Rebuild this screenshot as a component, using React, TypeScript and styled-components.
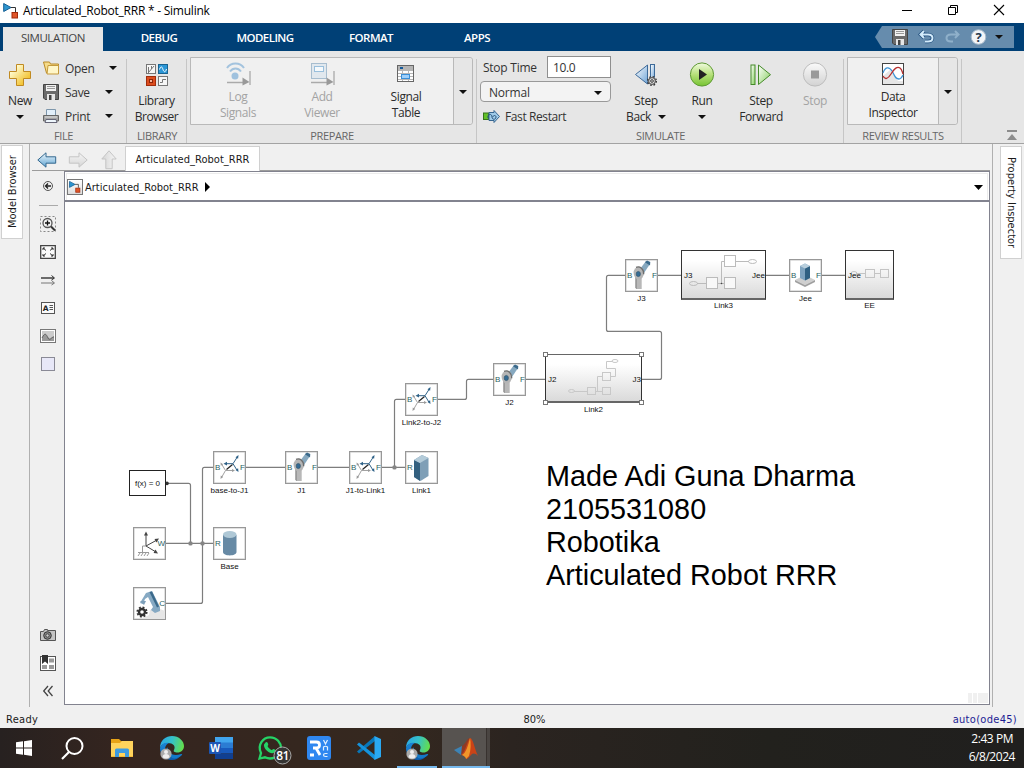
import React from "react";
import styled, { createGlobalStyle, css } from "styled-components";

const Global = createGlobalStyle`
  *{box-sizing:border-box}
  html,body{margin:0;padding:0;overflow:hidden}
  body{font-family:"Open Sans","Noto Sans",sans-serif;font-size:12px;color:#1a1a1a;background:#f0f0f0}
  svg{display:block;flex:none;overflow:visible}
`;

const Window = styled.div`width:1024px;height:768px;display:flex;flex-direction:column;overflow:hidden;background:#f0f0f0;`;

/* title bar */
const TitleBar = styled.header`height:23px;flex:none;background:#fff;display:flex;align-items:center;padding:0 2px 1px 3px;color:#000;`;
const Title = styled.span`flex:1;padding-left:4px;font-size:12px;letter-spacing:-0.24px;white-space:nowrap;line-height:22px;`;
const WinButton = styled.div`width:46px;height:20px;margin-bottom:2px;display:flex;align-items:center;justify-content:center;`;

/* tab strip */
const TabStrip = styled.nav`height:28px;flex:none;background:#004076;display:flex;align-items:flex-end;padding-left:3px;`;
const Tab = styled.div<{ $active?: boolean }>`
  width:106px;height:24px;line-height:21px;text-align:center;color:#fff;font-weight:600;letter-spacing:-0.55px;font-size:11.5px;
  ${(p) => p.$active && css`width:100px;margin-right:3px;background:#e6e6e6;color:#444;font-weight:400;letter-spacing:-0.45px;`}
`;
const Spacer = styled.div`flex:1;`;
const QuickAccess = styled.div`width:139px;height:22px;margin:0 10px 3px 0;background:#668cad;clip-path:polygon(7px 0,100% 0,100% 100%,7px 100%,0 50%);display:flex;align-items:center;padding-left:17px;gap:11px;
  & > :last-child{margin-left:-3px;}
`;

/* ribbon */
const Ribbon = styled.div`height:93px;flex:none;background:#e6e6e6;border-bottom:1px solid #a3a3a3;display:flex;`;
const Section = styled.section<{ $w: number }>`width:${(p) => p.$w}px;flex:none;display:flex;flex-direction:column;background:linear-gradient(#c6c6c6,#c6c6c6) right 8px/1px 84px no-repeat;`;
const SectionBody = styled.div`height:77px;padding-top:6px;display:flex;`;
const SectionName = styled.div`height:15px;line-height:15px;text-align:center;font-size:11px;letter-spacing:-0.35px;color:#666;white-space:nowrap;`;
const BigButton = styled.div<{ $w: number; $off?: boolean; $compact?: boolean }>`
  width:${(p) => p.$w}px;flex:none;display:flex;flex-direction:column;align-items:center;color:${(p) => (p.$off ? "#a3a3a3" : "#2b2b2b")};
  font-size:12px;line-height:16px;letter-spacing:-0.4px;white-space:nowrap;
  & > :first-child{height:${(p) => (p.$compact ? 31 : 36)}px;}
`;
const IconBox = styled.div`display:flex;align-items:center;justify-content:center;`;
const Line = styled.div`height:16px;display:flex;align-items:center;gap:7px;`;
const FileMenu = styled.div`display:flex;flex-direction:column;margin:-1px 0 0 3px;`;
const FileRow = styled.div<{ $gap: number }>`height:24px;display:flex;align-items:center;color:#333;letter-spacing:-0.3px;
  & > svg:first-child{margin-right:6px;}
  & > span{width:${(p) => p.$gap}px;}
`;
const Gallery = styled.div`height:68px;margin-left:3px;display:flex;border:1px solid #b9b9b9;border-radius:0 3px 3px 0;background:#f0f0f0;`;
const GalleryPad = styled.div`width:5px;`;
const GalleryDrop = styled.div`width:19px;border-left:1px solid #b9b9b9;background:#e6e6e6;display:flex;align-items:center;justify-content:center;border-radius:0 3px 3px 0;padding-top:2px;`;
const SimOptions = styled.div`width:131px;margin-left:3px;margin-right:7px;margin-top:-1px;display:flex;flex-direction:column;`;
const StopRow = styled.div`display:flex;align-items:center;justify-content:space-between;padding-left:3px;letter-spacing:-0.25px;color:#333;height:22px;`;
const TextField = styled.div`width:64px;height:22px;border:1px solid #8f8f8f;background:#fff;line-height:21px;padding-left:5px;letter-spacing:-0.4px;`;
const SelectBox = styled.div`height:22px;margin-top:3px;border:1px solid #999;border-radius:4px;background:#f3f3f3;display:flex;align-items:center;justify-content:space-between;padding:2px 8px 0;letter-spacing:-0.2px;color:#333;`;
const FastRow = styled.div`height:24px;margin-top:3px;display:flex;align-items:center;gap:5px;padding-left:3px;letter-spacing:-0.4px;color:#333;`;
const RibbonEnd = styled.div`flex:1;display:flex;align-items:flex-end;justify-content:flex-end;padding:0 7px 3px 0;`;

/* workspace */
const Work = styled.main`height:565px;flex:none;display:flex;font-family:"DejaVu Sans Condensed","DejaVu Sans",sans-serif;font-size:11px;`;
const Rail = styled.aside<{ $right?: boolean }>`width:30px;height:563px;flex:none;
  ${(p) => p.$right ? css`width:32px;border-left:1px solid #b0b0b0;padding:2px 0 0 7px;` : css`border-right:1px solid #b0b0b0;padding:1px 0 0 1px;`}
`;
const RailTab = styled.div<{ $h: number; $flip?: boolean }>`width:22px;height:${(p) => p.$h}px;background:#fff;border:1px solid #d0d0d0;writing-mode:vertical-rl;display:flex;align-items:center;justify-content:center;white-space:nowrap;color:#1a1a1a;letter-spacing:0;
  ${(p) => p.$flip && css`transform:rotate(180deg);`}
`;
const Center = styled.div`width:962px;flex:none;display:flex;flex-direction:column;`;
const DocTabs = styled.div`height:27px;margin:0 2px;display:flex;align-items:flex-end;background:linear-gradient(#9c9c9c,#9c9c9c) 0 26px/100% 1px no-repeat;`;
const NavArrows = styled.div`width:93px;height:26px;display:flex;align-items:center;padding:4px 0 0 5px;gap:11px;`;
const DocTab = styled.div`width:135px;height:25px;background:#fff;border:1px solid #d0d0d0;border-bottom:0;line-height:26px;text-align:center;letter-spacing:0.03px;color:#1a1a1a;`;
const Split = styled.div`display:flex;height:534px;`;
const Tools = styled.div`width:34px;display:flex;flex-direction:column;align-items:center;padding:1px 0 0 2px;`;
const Tool = styled.div`height:28px;display:flex;align-items:center;justify-content:center;`;
const ToolRule = styled.div`height:10px;width:19px;background:linear-gradient(#aaa,#aaa) 0 5px/100% 1px no-repeat;`;
const Editor = styled.div`width:926px;border:1px solid #82838f;background:#fff;display:flex;flex-direction:column;`;
const Crumb = styled.div`height:27px;margin:1px 1px 0;border:1px solid #ececec;border-bottom:0;display:flex;align-items:center;padding:0 4px 0 0;letter-spacing:0.01px;`;
const CrumbIcon = styled.div`width:16px;height:16px;border:1px solid #777;background:linear-gradient(#fff,#ddd);margin:0 2px 0 0;display:flex;align-items:center;justify-content:center;`;
const CrumbName = styled.span`margin-right:6px;`;
const CrumbRule = styled.div`height:2px;background:#82838f;flex:none;`;
const Canvas = styled.div`position:relative;flex:1;font-family:"Liberation Sans",Arial,sans-serif;overflow:hidden;`;
const Wires = styled.svg`position:absolute;left:0;top:0;`;

/* diagram nodes live at free positions on the canvas */
type BoxProps = { $x: number; $y: number; $w: number; $h: number; $kind?: string };
const Block = styled.div<BoxProps>`
  position:absolute;left:${(p) => p.$x - 65}px;top:${(p) => p.$y - 202}px;width:${(p) => p.$w}px;height:${(p) => p.$h}px;
  background:#fff;border:1px solid #989898;box-shadow:inset 0 0 0 0.5px #c4c4c4;
  ${(p) => p.$kind === "solver" && css`border-color:#222;box-shadow:none;`}
  ${(p) => (p.$kind === "sub" || p.$kind === "selected") && css`border-color:#333;box-shadow:none;border-bottom:2px solid #666;background:linear-gradient(#fff 20%,#dadada);`}
  ${(p) => p.$kind === "selected" && css`border-top-color:#666;`}
`;
const Port = styled.span<{ $right?: boolean; $dark?: boolean; $top?: number }>`position:absolute;top:${(p) => p.$top ?? 11}px;${(p) => (p.$right ? "right:0" : p.$dark ? "left:2px" : "left:1px")};font-size:8px;line-height:10px;color:${(p) => (p.$dark ? "#111" : "#2c6262")};`;
const BlockName = styled.span<{ $gap: number }>`position:absolute;top:calc(100% + ${(p) => p.$gap}px);left:50%;transform:translateX(-50%);white-space:nowrap;font-size:8px;line-height:10px;color:#111;`;
const Formula = styled.span`display:block;text-align:center;font-size:8px;line-height:25px;color:#111;`;
const Art = styled.svg`position:absolute;left:-1px;top:-1px;`;
const Note = styled.div`position:absolute;left:481px;top:258px;font-size:28.8px;line-height:33px;color:#000;white-space:pre;`;
const Grip = styled.div`position:absolute;right:1px;bottom:1px;display:flex;gap:1px;`;
const GripCell = styled.i<{ $w: number }>`width:${(p) => p.$w}px;height:10px;background:#f0f0f0;`;

/* status bar */
const Status = styled.footer`height:19px;flex:none;display:grid;grid-template-columns:1fr auto 1fr;align-items:center;padding:1px 7px 0 6px;font-family:"DejaVu Sans Condensed","DejaVu Sans",sans-serif;font-size:11px;letter-spacing:0.3px;`;
const Zoom = styled.span`padding-left:46px;letter-spacing:0;`;
const Solver = styled.span`text-align:right;color:#1c1c94;`;

/* taskbar */
const Taskbar = styled.div`height:40px;flex:none;display:flex;background:linear-gradient(90deg,#272120 0,#35251f 12%,#35281f 38%,#2b2420 50%,#22211d 75%,#201f1e 100%);color:#fff;`;
const Task = styled.div<{ $w: number; $state?: "open" | "active" }>`width:${(p) => p.$w}px;display:flex;align-items:center;justify-content:center;
  ${(p) => p.$state === "open" && css`background:linear-gradient(#76b9ed,#76b9ed) 4px 100%/40px 2px no-repeat;`}
  ${(p) => p.$state === "active" && css`background:linear-gradient(#76b9ed,#76b9ed) left bottom/100% 2px no-repeat,linear-gradient(90deg,#575350 0 44px,#38322f 44px 45px,#4a4542 45px);`}
`;
const Clock = styled.div`margin-left:auto;padding:2px 9px 0 0;text-align:right;line-height:18px;font-size:12px;letter-spacing:-0.45px;`;
const Time = styled.div`padding-right:2px;`;

const Caret = ({ c = "#111" }: { c?: string }) => <svg width="8" height="4"><path d="M0 0h8L4 4z" fill={c} /></svg>;

const ModelMark = ({ s = 16 }: { s?: number }) => (
  <svg width={s} height={s} viewBox="0 0 16 16">
    <path d="M8 4.500h4.500v4.500" fill="none" stroke="#333" />
    <path d="M.7.5v8L8 4.500z" fill="#2d95cf" stroke="#155f94" />
    <rect x="9" y="9.500" width="5.500" height="5.500" fill="#e0562a" stroke="#a22b0c" />
  </svg>
);
const Floppy = () => (
  <svg width="16" height="16" viewBox="0 0 16 16">
    <path d="M.5.5h15v15H2L.5 14z" fill="#6b6b6b" stroke="#444" />
    <rect x="3" y="1" width="10" height="6" fill="#f2f2f2" /><path d="M4 2.500h8M4 4.500h8" stroke="#999" />
    <rect x="4" y="10" width="8" height="6" fill="#e6e6e6" /><rect x="6" y="11" width="2.500" height="5" fill="#444" />
  </svg>
);
const Plus = () => (
  <svg width="22" height="22" viewBox="0 0 22 22">
    <defs><linearGradient id="gold" x2="1" y2="1"><stop offset=".2" stopColor="#fffbd0" /><stop offset=".8" stopColor="#f2c230" /></linearGradient></defs>
    <path d="M7.500.5h7v7h7v7h-7v7h-7v-7h-7v-7h7z" fill="url(#gold)" stroke="#c08a22" />
  </svg>
);
const Folder = () => (
  <svg width="16" height="16" viewBox="0 0 16 16">
    <path d="M.5 2h6l1 2h8v9H3.500z" fill="#f6dc8a" stroke="#b98a28" />
    <path d="M5 5.500h10.500V14H4z" fill="#fff6c8" stroke="#c59a3c" />
  </svg>
);
const Printer = () => (
  <svg width="16" height="16" viewBox="0 0 16 16">
    <path d="M3.500 1.500h9v6h-9z" fill="#e2effa" stroke="#7d96ab" />
    <path d="M.5 7.500h15V13H.5z" fill="#a5a5a5" stroke="#666" /><path d="M2 9h12" stroke="#e4e4e4" />
    <path d="M3 11.500h10l1 3H2z" fill="#eef6fc" stroke="#667" />
  </svg>
);
const Library = () => (
  <svg width="22" height="22" viewBox="0 0 22 22">
    <rect x=".5" y=".5" width="9" height="9" fill="#f6f6f6" stroke="#777" /><path d="M2.500 9V3M2.500 8.500L8 2M5.500 5V2" stroke="#777" fill="none" />
    <rect x="12.500" y=".5" width="9" height="9" fill="#2a96d6" stroke="#19628f" /><path d="M13.500 5.500c1.500-4 2.500-3 3.500 0s2.500 3 3.500-.5" stroke="#fff" fill="none" />
    <rect x=".5" y="12.500" width="9" height="9" fill="#dc4d1f" stroke="#a12c0c" /><rect x="3.500" y="15.500" width="3" height="3" fill="#f6b49b" stroke="#8c2508" />
    <rect x="12.500" y="12.500" width="9" height="9" fill="#f6f6f6" stroke="#777" /><path d="M14 18.500h2.500v-3H20" stroke="#777" fill="none" />
  </svg>
);
const LogSignals = () => (
  <svg width="26" height="24" viewBox="0 0 26 24">
    <g fill="none" stroke="#a3c3de" strokeWidth="2"><path d="M2 6c4-6 13-6 17 0M5 9.500c3-4 8-4 11 0" /></g>
    <circle cx="10" cy="14" r="3.500" fill="#9fc1de" /><path d="M2 20.500h16M25 9v14" stroke="#aaa" strokeWidth="1.300" /><path d="M17.500 15.500v8l7-3.500z" fill="#999" />
  </svg>
);
const AddViewer = () => (
  <svg width="26" height="24" viewBox="0 0 26 24">
    <rect x="2.500" y="1.500" width="15" height="15" fill="#e1e8ee" stroke="#a7bdcf" /><rect x="5.500" y="4.500" width="9" height="5" fill="#f5f9fc" stroke="#99bfdc" />
    <path d="M2 20.500h16M25 9v14" stroke="#aaa" strokeWidth="1.300" /><path d="M17.500 15.500v8l7-3.500z" fill="#999" />
  </svg>
);
const SignalTable = () => (
  <svg width="18" height="18" viewBox="0 0 18 18">
    <rect x=".5" y=".5" width="16" height="16" fill="#fff" stroke="#666" /><rect x="1" y="1" width="15" height="4" fill="#b5b5b5" /><rect x="3" y="2" width="3" height="2" fill="#15599a" />
    <path d="M1 5.500h15M1 8.500h15M1 11.500h15M1 14.500h15M5.500 5v11M11.500 5v11" stroke="#b5b5b5" />
    <rect x="4.500" y="9.500" width="8" height="4" fill="#9fd0fb" stroke="#3a8fd8" />
  </svg>
);
const StepBack = () => (
  <svg width="24" height="24" viewBox="0 0 24 24">
    <defs><linearGradient id="sb" x2="1" y2="1"><stop stopColor="#fff" /><stop offset="1" stopColor="#6fa5d8" /></linearGradient></defs>
    <path d="M13.500 2v19L1.500 11.500z" fill="url(#sb)" stroke="#3d6a99" /><rect x="16.500" y="1.500" width="4" height="16" fill="url(#sb)" stroke="#3d6a99" />
    <circle cx="18" cy="18" r="4.300" fill="#ddd" stroke="#333" strokeWidth="1.400" strokeDasharray="1.700 1.700" /><circle cx="18" cy="18" r="3.400" fill="#ddd" stroke="#444" /><circle cx="18" cy="18" r="1.300" fill="#fff" stroke="#333" />
  </svg>
);
const Run = () => (
  <svg width="26" height="26" viewBox="0 0 26 26">
    <defs><linearGradient id="rg" x2="0" y2="1"><stop stopColor="#f1fbe0" /><stop offset=".5" stopColor="#b6e07a" /><stop offset="1" stopColor="#76c332" /></linearGradient></defs>
    <circle cx="13" cy="12.500" r="11.600" fill="url(#rg)" stroke="#5f9a35" /><path d="M10 7v11l8-5.500z" fill="#222" />
  </svg>
);
const StepForward = () => (
  <svg width="24" height="22" viewBox="0 0 24 22">
    <defs><linearGradient id="sf" x2="1" y2="1"><stop stopColor="#fff" /><stop offset="1" stopColor="#86cf5d" /></linearGradient></defs>
    <rect x="2" y="1" width="4" height="19.500" fill="url(#sf)" stroke="#458a2a" /><path d="M9.500 1v19.500l12-9.800z" fill="url(#sf)" stroke="#458a2a" />
  </svg>
);
const Stop = () => (
  <svg width="26" height="26" viewBox="0 0 26 26">
    <defs><linearGradient id="st" x2="0" y2="1"><stop stopColor="#fafafa" /><stop offset="1" stopColor="#d2d2d2" /></linearGradient></defs>
    <circle cx="13" cy="12.500" r="11.600" fill="url(#st)" stroke="#bdbdbd" /><rect x="9" y="8.500" width="8" height="8" fill="#9a9a9a" />
  </svg>
);
const Inspector = () => (
  <svg width="22" height="22" viewBox="0 0 22 22">
    <rect x=".5" y=".5" width="21" height="21" fill="#fff" stroke="#444" />
    <path d="M1 21V13l7-6 4 5 4 6h5v3z" fill="#e6e6e6" />
    <path d="M1 10c2-6 6-7 9-2 3 5 3 8 7 8 2 0 3-2 4-4" fill="none" stroke="#3f94d6" strokeWidth="1.300" /><path d="M1 13c2 4 5 3 8-2s6-8 9-6c2 1.500 2 3 3 6" fill="none" stroke="#b52f2f" strokeWidth="1.300" />
  </svg>
);
const FastRestart = () => (
  <svg width="17" height="14" viewBox="0 0 17 14">
    <rect x=".5" y="3" width="5" height="6.500" fill="#63c029" stroke="#35751a" /><path d="M6 2.500h5V.5l5.500 6-5.500 6v-2H6z" fill="#9fcbe9" stroke="#376690" />
    <path d="M5 8c-1-4 4-5 4-1 0 3 4 3 4 0 0-2-3-2-3 0" fill="none" stroke="#28557d" />
  </svg>
);
const NavArrow = ({ on, dir = "" }: { on?: boolean; dir?: string }) => (
  <svg width="20" height="18" viewBox="0 0 20 18">
    <defs><linearGradient id={on ? "na" : "nb"} x2="0" y2="1"><stop stopColor={on ? "#f0f8fd" : "#f6f6f6"} /><stop offset="1" stopColor={on ? "#5fa4d2" : "#d5d5d5"} /></linearGradient></defs>
    <path transform={dir} d="M.8 9l8.200-7.200v4h9.700v6.400H9v4z" fill={`url(#${on ? "na" : "nb"})`} stroke={on ? "#34688f" : "#c5c5c5"} />
  </svg>
);

const G = ({ children, w = 16, h = 16 }: { children: React.ReactNode; w?: number; h?: number }) => <svg width={w} height={h} viewBox={`0 0 ${w} ${h}`} fill="none">{children}</svg>;

/* artwork of the 33px blocks */
const Transform = () => (
  <Art width="33" height="33" fill="none">
    <g stroke="#a2a2a2"><path d="M12.500 19.500l-4 7M12.500 19.500h7.500M12.500 19.500l-4-6.500" /></g>
    <path d="M7.500 28l.3-3.500 2.400 1.400zM22 19.500l-3-1.600v3.200zM7.500 11.500l.3 3.300 2.400-1.600z" fill="#999" />
    <path d="M13.500 18.500l6-5" stroke="#222" strokeWidth="1.200" />
    <path d="M20 12.700l4.500-7M20 12.700h-7M20 12.700l4 6.500" stroke="#2f6288" /><path d="M25.500 4l-3 2.200 2.600 1.600zM10.500 12.700l3.500-1.900v3.800zM25.500 21l-3-2 2.600-1.700z" fill="#2f6288" />
  </Art>
);
const Joint = () => (
  <Art width="33" height="33">
    <path d="M15 10l6-8 4 3-6 9z" fill="#86a8bf" /><path d="M20 3.200l2-1.700 3.300 1.500-.3 3.500z" fill="#3b6a8b" />
    <path d="M11 16h5.700v14H11z" fill="#b8b8b8" /><path d="M10.200 18H12v12l-1.800-1z" fill="#999" />
    <ellipse cx="13.800" cy="14" rx="5.200" ry="6.300" fill="#b5b5b5" /><path d="M11 8.300c4-1.500 8 1.500 7.700 7" fill="none" stroke="#6d6d6d" strokeWidth="1.300" />
    <ellipse cx="13.300" cy="15" rx="2.100" ry="2.600" fill="#356b93" stroke="#31566f" strokeWidth=".7" />
  </Art>
);
const Brick = () => (
  <Art width="33" height="33"><path d="M9 9l8-5 6.500 3v18L15.500 30 9 26z" fill="#7f9fb7" /><path d="M9 9l6 3v18l-6-4z" fill="#33607f" /><path d="M9 9l8-5 6.500 3L15 12z" fill="#b3cbd9" /></Art>
);
const Cylinder = () => (
  <Art width="33" height="33"><path d="M10 8v17c0 4.500 13.500 4.500 13.500 0V8z" fill="#678aa5" /><ellipse cx="16.750" cy="7.500" rx="6.750" ry="3.400" fill="#afc8d6" /></Art>
);
const World = () => (
  <Art width="33" height="33" fill="none">
    <path d="M13 19V7M13 19l11-6M13 19l10 6" stroke="#444" /><path d="M13 4.500l-2 4h4zM26 11.500l-4.500.5 2 3.500zM25 26.500l-4.500-.5 2-3.500z" fill="#444" />
    <path d="M13 19H9.500v6M5 25.500h11M7 26l-2 3M10 26l-2 3M13 26l-2 3M16 26l-2 3" stroke="#999" />
  </Art>
);
const Config = () => (
  <Art width="33" height="33">
    <path d="M17 23l5-3 10 4v8H8l8-4z" fill="#e6e6e6" /><path d="M13 6l6-2 8 16v4l-5 2-4-3 2-3-5-10-3 2-2 5-3-1z" fill="#86a9c3" /><path d="M16.500 5l2.500-.5 7 15-2 1z" fill="#3b6a8b" />
    <path d="M7 14h6l-2 4z" fill="#7d9fb9" /><circle cx="9" cy="25" r="3" fill="none" stroke="#333" strokeWidth="2.400" /><circle cx="9" cy="25" r="4.700" fill="none" stroke="#333" strokeWidth="1.800" strokeDasharray="1.900 1.790" />
  </Art>
);
const Effector = () => (
  <Art width="33" height="33"><path d="M6 21l10-5 10 5-10 5z" fill="#cfcfcf" /><path d="M6 21l10 5v2L6 23zM26 21l-10 5v2l10-5z" fill="#a0a0a0" /><path d="M11 7l5-2.500L21 7v12l-5 2.500-5-2.500z" fill="#7ea3bf" /><path d="M16 9.500L21 7v12l-5 2.500z" fill="#2f6082" /><path d="M11 7l5-2.500L21 7l-5 2.500z" fill="#b9cfdd" /></Art>
);

type SmallDef = { x: number; y: number; art: React.ReactNode; l?: string; r?: string; name?: string };
const smallBlocks: SmallDef[] = [
  { x: 133, y: 527, art: <World />, r: "W" },
  { x: 133, y: 587, art: <Config />, r: "C" },
  { x: 213, y: 451, art: <Transform />, l: "B", r: "F", name: "base-to-J1" },
  { x: 285, y: 451, art: <Joint />, l: "B", r: "F", name: "J1" },
  { x: 349, y: 451, art: <Transform />, l: "B", r: "F", name: "J1-to-Link1" },
  { x: 405, y: 451, art: <Brick />, l: "R", name: "Link1" },
  { x: 213, y: 527, art: <Cylinder />, l: "R", name: "Base" },
  { x: 405, y: 383, art: <Transform />, l: "B", r: "F", name: "Link2-to-J2" },
  { x: 493, y: 363, art: <Joint />, l: "B", r: "F", name: "J2" },
  { x: 625, y: 259, art: <Joint />, l: "B", r: "F", name: "J3" },
  { x: 789, y: 259, art: <Effector />, l: "B", r: "F", name: "Jee" },
];

const Diagram = () => (
  <Canvas>
    <Wires width="924" height="502" viewBox="65 202 924 502" fill="none">
      <g stroke="#7d7d7d" strokeWidth="1.200">
        <path d="M166 483.400h22.500q2 0 2 2v58M166 543.400h48M166 603.400h34.500q2 0 2-2V469.400q0-2 2-2h9M246 467.400h39M318 467.400h31M382 467.400h23M394.500 467.400v-66q0-2 2-2h9M438 399.400h26.500q2 0 2-2v-16q0-2 2-2H493M526 379.400h19M642 379.400h17.500q2 0 2-2v-44q0-2-2-2h-51q-2 0-2-2v-52q0-2 2-2H625M658 275.400h23M766 275.400h23M822 275.400h23" />
      </g>
      <g fill="#858585"><circle cx="190.500" cy="543.400" r="2.200" /><circle cx="202.500" cy="543.400" r="2.200" /><circle cx="394.500" cy="467.400" r="2.200" /></g>
      <circle cx="167" cy="483.400" r="1.800" fill="#333" />
    </Wires>
    <Block $x={129} $y={470} $w={37} $h={26} $kind="solver"><Formula>f(x) = 0</Formula></Block>
    {smallBlocks.map((b, i) => (
      <Block key={i} $x={b.x} $y={b.y} $w={33} $h={33}>
        {b.art}
        {b.l && <Port>{b.l}</Port>}
        {b.r && <Port $right>{b.r}</Port>}
        {b.name && <BlockName $gap={3}>{b.name}</BlockName>}
      </Block>
    ))}
    <Block $x={681} $y={250} $w={85} $h={50} $kind="sub">
      <Art width="85" height="50" fill="none" stroke="#bbb"><rect x="25.500" y="27.500" width="11" height="11" fill="#f8f8f8" /><rect x="43.500" y="27.500" width="11" height="11" fill="#f8f8f8" /><rect x="43.500" y="5.500" width="11" height="11" fill="#fff" /><path d="M16 33.500h9M37 33.500h6M40.500 33.500v-22h3M55 11.500h13" /><ellipse cx="12.500" cy="33.500" rx="4" ry="2" /><ellipse cx="71.500" cy="11.500" rx="4" ry="2" /><circle cx="40.500" cy="33.500" r=".8" fill="#444" stroke="none" /></Art>
      <Port $dark $top={20}>J3</Port><Port $dark $right $top={20}>Jee</Port><BlockName $gap={3}>Link3</BlockName>
    </Block>
    <Block $x={845} $y={250} $w={49} $h={50} $kind="sub">
      <Art width="49" height="50" fill="none" stroke="#c4c4c4"><rect x="20.500" y="19.500" width="9" height="8" /><rect x="35.500" y="19.500" width="8" height="8" /><path d="M11 23.500h9M30 23.500h5" /><ellipse cx="9" cy="23.500" rx="3" ry="2" /></Art>
      <Port $dark $top={20}>Jee</Port><BlockName $gap={3}>EE</BlockName>
    </Block>
    <Block $x={545} $y={354} $w={97} $h={49} $kind="selected">
      <Art width="97" height="49" fill="none" stroke="#c8c8c8"><rect x="42.500" y="33.500" width="8" height="7" /><rect x="57.500" y="33.500" width="8" height="7" /><rect x="57.500" y="18.500" width="8" height="8" /><path d="M29 37.500h13M51 37.500h6M52.500 37.500v-15h5M66 22.500h4.500v-8h-9v-7h6" /><ellipse cx="26.500" cy="37" rx="3" ry="1.500" /><ellipse cx="70" cy="7" rx="3" ry="1.500" />
        <g fill="#fff" stroke="#777"><rect x="-1.500" y="-1.500" width="4" height="4" /><rect x="94.500" y="-1.500" width="4" height="4" /><rect x="-1.500" y="46.500" width="4" height="4" /><rect x="94.500" y="46.500" width="4" height="4" /></g></Art>
      <Port $dark $top={20}>J2</Port><Port $dark $right $top={20}>J3</Port><BlockName $gap={4}>Link2</BlockName>
    </Block>
    <Note>{"Made Adi Guna Dharma\n2105531080\nRobotika\nArticulated Robot RRR"}</Note>
    <Grip><GripCell $w={4} /><GripCell $w={4} /><GripCell $w={10} /></Grip>
  </Canvas>
);

const Edge = () => (
  <svg width="24" height="24" viewBox="0 0 24 24">
    <defs>
      <linearGradient id="e1" x1="0" y1=".2" x2="1" y2=".4"><stop stopColor="#2aa6e8" /><stop offset=".5" stopColor="#35c1c9" /><stop offset="1" stopColor="#62dd4f" /></linearGradient>
      <linearGradient id="e2" x2=".6" y2="1"><stop stopColor="#1b8ada" /><stop offset="1" stopColor="#0c5caf" /></linearGradient>
    </defs>
    <path d="M0 12C0 4 6 0 12 0c7 0 12 5 12 10 0 4-3 6.500-6.500 6.500-3 0-4.500-1-3.500-2.500 2-4-1-7-6-7-4 0-7 2-8 5z" fill="url(#e1)" />
    <path d="M0 12c1-4 5-6 9-5-4 2-5 6-3 10 2 5 9 7 15 2-2 3-5 5-9 5C5 24 0 19 0 12z" fill="url(#e2)" /><path d="M8 11c-1 5 4 10 13 7 1 0 1.500.3 1 1-3 3-7 4-10 3-5-2-7-7-4-11z" fill="#1379c8" />
    <circle cx="6" cy="18" r="5.600" fill="#aaa" /><circle cx="6" cy="16" r="2" fill="#eee" /><path d="M2.500 21c0-4 7-4 7 0-2 2-5 2-7 0z" fill="#eee" />
  </svg>
);

export default function App() {
  return (
    <Window>
      <Global />
      <TitleBar>
        <ModelMark />
        <Title>Articulated_Robot_RRR * - Simulink</Title>
        <WinButton><G w={10} h={10}><path d="M0 5.500h10" stroke="#000" /></G></WinButton>
        <WinButton><G w={10} h={10}><path d="M.5 2.500h7v7h-7zM2.500 2.500v-2h7v7h-2" stroke="#000" /></G></WinButton>
        <WinButton><G w={10} h={10}><path d="M0 0l10 10M10 0L0 10" stroke="#000" strokeWidth="1.100" /></G></WinButton>
      </TitleBar>
      <TabStrip>
        <Tab $active>SIMULATION</Tab><Tab>DEBUG</Tab><Tab>MODELING</Tab><Tab>FORMAT</Tab><Tab>APPS</Tab>
        <Spacer />
        <QuickAccess>
          <Floppy />
          <G w={15} h={14}><path d="M5 1L1.500 4.500 5 8M2 4.500h7c6 0 6 7 0 7H6" stroke="#1f4d7c" strokeWidth="3.500" /><path d="M5 1L1.500 4.500 5 8M2 4.500h7c6 0 6 7 0 7H6" stroke="#d4ecfb" strokeWidth="2" /></G>
          <G w={15} h={14}><path d="M10 1l3.500 3.500L10 8M13 4.500H6c-6 0-6 7 0 7h2" stroke="#8fb0ca" strokeWidth="2" /></G>
          <svg width="16" height="16" viewBox="0 0 16 16"><circle cx="7.500" cy="8" r="7.300" fill="#f2f5f8" stroke="#a7b9ca" /><text x="7.500" y="12.500" textAnchor="middle" fontSize="13" fontWeight="700" fill="#26384e">?</text></svg>
          <Caret />
        </QuickAccess>
      </TabStrip>
      <Ribbon>
        <Section $w={127}>
          <SectionBody>
            <BigButton $w={40}><IconBox><Plus /></IconBox><Line>New</Line><Line><Caret /></Line></BigButton>
            <FileMenu>
              <FileRow $gap={44}><Folder /><span>Open</span><Caret /></FileRow>
              <FileRow $gap={40}><Floppy /><span>Save</span><Caret /></FileRow>
              <FileRow $gap={40}><Printer /><span>Print</span><Caret /></FileRow>
            </FileMenu>
          </SectionBody>
          <SectionName>FILE</SectionName>
        </Section>
        <Section $w={60}>
          <SectionBody><BigButton $w={59}><IconBox><Library /></IconBox><Line>Library</Line><Line>Browser</Line></BigButton></SectionBody>
          <SectionName>LIBRARY</SectionName>
        </Section>
        <Section $w={290}>
          <SectionBody>
            <Gallery>
              <GalleryPad />
              <BigButton $w={84} $compact $off><IconBox><LogSignals /></IconBox><Line>Log</Line><Line>Signals</Line></BigButton>
              <BigButton $w={84} $compact $off><IconBox><AddViewer /></IconBox><Line>Add</Line><Line>Viewer</Line></BigButton>
              <BigButton $w={84} $compact><IconBox><SignalTable /></IconBox><Line>Signal</Line><Line>Table</Line></BigButton>
              <GalleryPad />
              <GalleryDrop><Caret /></GalleryDrop>
            </Gallery>
          </SectionBody>
          <SectionName>PREPARE</SectionName>
        </Section>
        <Section $w={367}>
          <SectionBody>
            <SimOptions>
              <StopRow>Stop Time<TextField>10.0</TextField></StopRow>
              <SelectBox>Normal<Caret /></SelectBox>
              <FastRow><FastRestart />Fast Restart</FastRow>
            </SimOptions>
            <BigButton $w={56}><IconBox><StepBack /></IconBox><Line>Step</Line><Line>Back<Caret /></Line></BigButton>
            <BigButton $w={56}><IconBox><Run /></IconBox><Line>Run</Line><Line><Caret /></Line></BigButton>
            <BigButton $w={62}><IconBox><StepForward /></IconBox><Line>Step</Line><Line>Forward</Line></BigButton>
            <BigButton $w={46} $off><IconBox><Stop /></IconBox><Line>Stop</Line></BigButton>
          </SectionBody>
          <SectionName>SIMULATE</SectionName>
        </Section>
        <Section $w={118}>
          <SectionBody>
            <Gallery>
              <BigButton $w={90} $compact><IconBox><Inspector /></IconBox><Line>Data</Line><Line>Inspector</Line></BigButton>
              <GalleryDrop><Caret /></GalleryDrop>
            </Gallery>
          </SectionBody>
          <SectionName>REVIEW RESULTS</SectionName>
        </Section>
        <RibbonEnd><G w={10} h={10}><path d="M0 1h10" stroke="#8c8c8c" strokeWidth="2" /><path d="M0 10l5-6 5 6z" fill="#8c8c8c" /></G></RibbonEnd>
      </Ribbon>
      <Work>
        <Rail><RailTab $h={94} $flip>Model Browser</RailTab></Rail>
        <Center>
          <DocTabs>
            <NavArrows><NavArrow on /><NavArrow dir="matrix(-1 0 0 1 20 0)" /><NavArrow dir="rotate(90 10 9)" /></NavArrows>
            <DocTab>Articulated_Robot_RRR</DocTab>
          </DocTabs>
          <Split>
            <Tools>
              <Tool><G w={10} h={10}><circle cx="5" cy="5" r="4.500" stroke="#555" /><path d="M8 5H3M5 2.500L2.500 5 5 7.500" stroke="#222" strokeWidth="1.300" /></G></Tool>
              <ToolRule />
              <Tool><G><path d="M.5.5h15v15H.5z" stroke="#888" strokeDasharray="2 2" /><circle cx="7.500" cy="7" r="4.500" fill="#f3f3f3" stroke="#555" strokeWidth="1.300" /><path d="M5 7h5M7.500 4.500v5" stroke="#111" strokeWidth="1.300" /><path d="M11 10.500l4 4" stroke="#333" strokeWidth="2" /></G></Tool>
              <Tool><G w={16} h={14}><path d="M.7.7h14.600v12.600H.7z" fill="#fafafa" stroke="#444" strokeWidth="1.300" /><path d="M3 5V3h2M3 3l3 2.500M13 5V3h-2M13 3l-3 2.500M3 9v2h2M3 11l3-2.500M13 9v2h-2M13 11l-3-2.500" stroke="#333" /></G></Tool>
              <Tool><G w={14} h={11}><path d="M0 3h13" stroke="#222" strokeWidth="1.300" /><path d="M10.500.5l3 2.500-3 2" stroke="#333" /><path d="M0 8h13" stroke="#777" /><path d="M10.500 5.500l3 2.500-3 2" stroke="#777" /></G></Tool>
              <Tool><svg width="14" height="12" viewBox="0 0 14 12"><rect x=".5" y=".5" width="13" height="11" fill="#fafafa" stroke="#555" /><text x="1.800" y="8.700" fontSize="7.500" fontWeight="700" fontFamily="DejaVu Sans" fill="#222">A</text><path d="M8.500 3.500H12M8.500 5.500H12M8.500 7.500H12" stroke="#555" /></svg></Tool>
              <Tool><G w={16} h={14}><rect x=".5" y=".5" width="15" height="13" fill="#fff" stroke="#777" /><rect x="2" y="2" width="12" height="10" fill="#ccc" /><path d="M2 9c3-6 4-4 6-1s3 0 6-1v5H2z" fill="#999" /><path d="M2 9c3-6 4-4 6 0s3-1 6-1" stroke="#666" /></G></Tool>
              <Tool><G w={14} h={14}><rect x=".5" y=".5" width="13" height="13" fill="#e8e8f8" stroke="#8a8a96" /></G></Tool>
              <Spacer />
              <Tool><G w={16} h={12}><path d="M.5 2.500h3l1-2h3v1h8v10H.5z" fill="#c4c4c4" stroke="#555" /><circle cx="7.500" cy="6.500" r="3.800" fill="#888" stroke="#333" /><circle cx="7.500" cy="6.500" r="1.700" fill="#ccc" stroke="#444" /></G></Tool>
              <Tool><G><rect x=".5" y="1.500" width="15" height="14" fill="#fff" stroke="#555" /><path d="M9 3.500h5v4H9zM2 10h5v4H2zM9 10h5v4H9z" fill="#999" /><path d="M2 0h6v9L5 6.500 2 9z" fill="#333" /></G></Tool>
              <Tool><G w={10} h={10}><path d="M5 0L.7 5 5 10M9.500 0L5.200 5l4.300 5" stroke="#444" strokeWidth="1.300" /></G></Tool>
            </Tools>
            <Editor>
              <Crumb><CrumbIcon><ModelMark s={12} /></CrumbIcon><CrumbName>Articulated_Robot_RRR</CrumbName><G w={5} h={10}><path d="M0 0v10l5-5z" fill="#000" /></G><Spacer /><svg width="9" height="5"><path d="M0 0h9L4.500 5z" fill="#000" /></svg></Crumb>
              <CrumbRule />
              <Diagram />
            </Editor>
          </Split>
        </Center>
        <Rail $right><RailTab $h={113}>Property Inspector</RailTab></Rail>
      </Work>
      <Status><span>Ready</span><Zoom>80%</Zoom><Solver>auto(ode45)</Solver></Status>
      <Taskbar>
        <Task $w={48}><G><path d="M0 2.200l7-.9v6.200H0zM8 1.200L16 0v7.500H8zM0 8.500h7v6.200l-7-.9zM8 8.500h8V16l-8-1.200z" fill="#fff" /></G></Task>
        <Task $w={48}><G w={22} h={23}><circle cx="13.500" cy="9" r="8" stroke="#fff" strokeWidth="2" /><path d="M8 15l-7 7" stroke="#fff" strokeWidth="2.200" /></G></Task>
        <Task $w={52}><G w={22} h={18}><path d="M0 0h8l2 2h12v16H0z" fill="#e8a317" /><path d="M0 4h9l2-2h11v15.500H0z" fill="#ffd35c" /><path d="M4 18v-7q0-1.500 1.500-1.500h11q1.500 0 1.500 1.500v7h-4v-4H8v4z" fill="#3e9be0" /></G></Task>
        <Task $w={48}><Edge /></Task>
        <Task $w={50}><svg width="24" height="22" viewBox="0 0 24 22"><path d="M6 0h18v6H6z" fill="#41a5ee" /><path d="M6 5.500h18V11H6z" fill="#2b7cd3" /><path d="M6 11h18v5.500H6z" fill="#185abd" /><path d="M6 16.500h18V22H6z" fill="#103f91" /><rect y="5" width="12" height="12" rx="1" fill="#1c56b5" /><text x="6" y="14.500" fontSize="10" fontWeight="700" fill="#fff" textAnchor="middle">W</text></svg></Task>
        <Task $w={48}><svg width="24" height="24" viewBox="0 0 24 24"><path d="M1.500 22.500L3 17C-1 9 5 1.300 12 1.300S23 7 23 12s-4 10.500-11 10.500c-2 0-3.500-.5-5-1.200z" fill="none" stroke="#25d366" strokeWidth="2.300" /><path d="M7.500 6.500c1-1 2-.5 2.500 1s.3 1.800-.5 2.500c1 2 2.500 3.500 4.500 4.300 1-1.800 1.500-1.500 3.500-.5.500 3-3 4-5.500 3C8 15 5.500 11 6 8.500z" fill="#25d366" /><circle cx="24.500" cy="19.500" r="8.500" fill="#353433" stroke="#aaa" /><text x="24.500" y="24" fontSize="12" fontWeight="600" letterSpacing="-.6" fill="#fff" textAnchor="middle">81</text></svg></Task>
        <Task $w={50}><svg width="24" height="24" viewBox="0 0 24 24"><rect width="24" height="24" rx="3" fill="#2f87f0" /><path d="M3 6h6.500c4 0 4 6 0 6H6M6 12h3l4 7M3 19h4" fill="none" stroke="#fff" strokeWidth="2.800" strokeLinejoin="round" /><g fill="none" stroke="#e2f0ff" strokeWidth="1.200"><path d="M16.500 4l2 4 2-4M16.500 14.500v-3.500q2-1.500 4 0v3.500M20.500 17.500h-2q-2 0-2 1.500t2 1.500h2" /></g></svg></Task>
        <Task $w={49}><G w={24} h={24}><path d="M0 15.500l2 2L18 5V0z" fill="#0877b9" /><path d="M0 8.500l2-2L18 19v5z" fill="#1593dc" /><path d="M17.500 0L24 3v18l-6.500 3z" fill="#2aa9f2" /></G></Task>
        <Task $w={49} $state="open"><Edge /></Task>
        <Task $w={48} $state="active"><G w={24} h={22}><path d="M0 13l8-4 4 4-5 5z" fill="#3d83b5" /><path d="M8 9c3-1 5-8 8-8l-5 14-4 3z" fill="#8f3a25" /><path d="M16 1c3 0 5 12 8 18-3-3-5-3-7-1-2 2-3 4-5 4 0-3-3-4-5-4 4-2 6-13 9-17z" fill="#c94317" /><path d="M16 1c1 5 1 12-1 18l-3 3c0-2-2-3-4-4 4-2 6-9 8-17z" fill="#f0952a" /></G></Task>
        <Clock><Time>2:43 PM</Time><div>6/8/2024</div></Clock>
      </Taskbar>
    </Window>
  );
}
